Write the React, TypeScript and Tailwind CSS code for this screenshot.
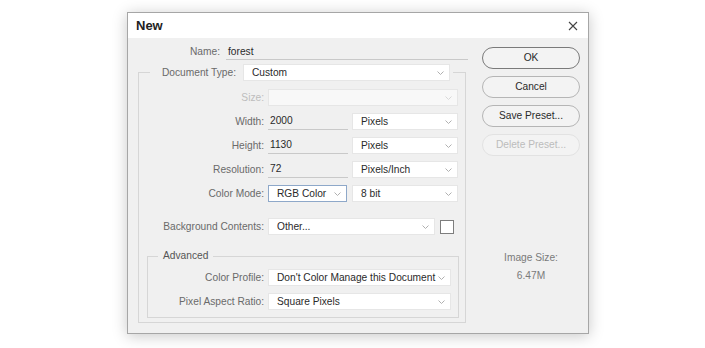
import React from 'react';

function Chevron({ light }: { light?: boolean }) {
  return (
    <svg width="7" height="4" viewBox="0 0 7 4" className="shrink-0">
      <path d="M0.5 0.5 L3.5 3.5 L6.5 0.5" fill="none" stroke={light ? '#d8d8d8' : '#b0b0b0'} strokeWidth="1" />
    </svg>
  );
}

function Select({ width, value, disabled, focused }: { width: string; value?: string; disabled?: boolean; focused?: boolean }) {
  const border = focused ? 'border-[#8ea8c9]' : 'border-[#e6e6e6]';
  const bg = disabled ? 'bg-[#f8f8f8]' : 'bg-white';
  return (
    <div className={`h-[17px] ${width} ${bg} ${border} border flex items-center justify-between pl-[8px] pr-[5px]`}>
      <span className="text-[#2a2a2a] whitespace-nowrap">{value}</span>
      <Chevron light={disabled} />
    </div>
  );
}

function Field({ value }: { value: string }) {
  return (
    <div className="h-[17px] w-[80px] border-b border-[#c9c9c9] pl-[2px] flex items-center text-[#2a2a2a]">{value}</div>
  );
}

function Row({ label, labelW, disabled, className, children }: { label: string; labelW: string; disabled?: boolean; className?: string; children: React.ReactNode }) {
  return (
    <div className={`flex items-center h-[17px] ${className || ''}`}>
      <div className={`${labelW} shrink-0 text-right pr-[4px] whitespace-nowrap ${disabled ? 'text-[#bdbdbd]' : 'text-[#6a6a6a]'}`}>{label}</div>
      {children}
    </div>
  );
}

function Button({ label, primary, disabled }: { label: string; primary?: boolean; disabled?: boolean }) {
  const border = primary ? 'border-[#7a7a7a]' : disabled ? 'border-[#e2e2e2]' : 'border-[#b5b5b5]';
  const text = disabled ? 'text-[#bcbcbc]' : 'text-[#2a2a2a]';
  return (
    <div className={`w-[98px] h-[22px] rounded-full border ${border} ${text} bg-[#f3f3f3] flex items-center justify-center`}>{label}</div>
  );
}

export default function App() {
  return (
    <div className="w-[705px] h-[348px] bg-white pt-[12px] pl-[127px] font-['Liberation_Sans',Arial,sans-serif] text-[10.2px] leading-[14px]">
      <div className="w-[462px] h-[322px] border border-[#a6a6a6] bg-[#f0f0f0] shadow-[0_2px_14px_rgba(0,0,0,0.22)] flex flex-col">
        {/* title bar */}
        <div className="h-[25px] bg-white flex items-center justify-between pl-[8px] pr-[10px] shrink-0">
          <span className="font-bold text-[13px] text-[#222]">New</span>
          <svg width="10" height="10" viewBox="0 0 10 10">
            <path d="M1 1 L9 9 M9 1 L1 9" stroke="#444" strokeWidth="1.1" />
          </svg>
        </div>

        <div className="flex flex-1">
          {/* left column */}
          <div className="w-[344px] pl-[10px] pt-[6px]">
            <div className="flex items-center h-[16px]">
              <div className="w-[84px] text-right pr-[2px] text-[#6a6a6a]">Name:</div>
              <div className="ml-[4px] w-[242px] h-[16px] border-b border-[#c9c9c9] pl-[2px] flex items-center text-[#2a2a2a]">forest</div>
            </div>

            <fieldset className="mt-[4px] w-[328px] border border-[#d6d6d6] pt-[8px] pb-[4px]">
              <legend className="ml-[11px] pl-[12px] pr-[3px]">
                <div className="flex items-center h-[17px]">
                  <span className="w-[81px] text-[#6a6a6a] whitespace-nowrap">Document Type:</span>
                  <Select width="w-[207px]" value="Custom" />
                </div>
              </legend>

              <div className="flex flex-col gap-[7px]">
                <Row label="Size:" labelW="w-[129px]" disabled>
                  <Select width="w-[190px]" disabled />
                </Row>
                <Row label="Width:" labelW="w-[129px]">
                  <Field value="2000" />
                  <div className="ml-[4px]"><Select width="w-[106px]" value="Pixels" /></div>
                </Row>
                <Row label="Height:" labelW="w-[129px]">
                  <Field value="1130" />
                  <div className="ml-[4px]"><Select width="w-[106px]" value="Pixels" /></div>
                </Row>
                <Row label="Resolution:" labelW="w-[129px]">
                  <Field value="72" />
                  <div className="ml-[4px]"><Select width="w-[106px]" value="Pixels/Inch" /></div>
                </Row>
                <Row label="Color Mode:" labelW="w-[129px]">
                  <Select width="w-[79px]" value="RGB Color" focused />
                  <div className="ml-[5px]"><Select width="w-[106px]" value="8 bit" /></div>
                </Row>
                <Row label="Background Contents:" labelW="w-[129px]" className="mt-[9px]">
                  <Select width="w-[167px]" value="Other..." />
                  <div className="ml-[5px] w-[14px] h-[14px] border border-[#7d7d7d] bg-white" />
                </Row>

                <fieldset className="mt-[7px] ml-[8px] w-[312px] border border-[#d6d6d6] pt-[6px] pb-[7px]">
                  <legend className="ml-[10px] px-[5px] text-[#555]">Advanced</legend>
                  <div className="flex flex-col gap-[7px]">
                    <Row label="Color Profile:" labelW="w-[120px]">
                      <Select width="w-[183px]" value="Don't Color Manage this Document" />
                    </Row>
                    <Row label="Pixel Aspect Ratio:" labelW="w-[120px]">
                      <Select width="w-[183px]" value="Square Pixels" />
                    </Row>
                  </div>
                </fieldset>
              </div>
            </fieldset>
          </div>

          {/* right column */}
          <div className="pl-[10px] pt-[9px] flex flex-col">
            <div className="flex flex-col gap-[7px]">
              <Button label="OK" primary />
              <Button label="Cancel" />
              <Button label="Save Preset..." />
              <Button label="Delete Preset..." disabled />
            </div>
            <div className="w-[98px] mt-[95px] text-center text-[#7a7a7a]">Image Size:</div>
            <div className="w-[98px] mt-[4px] text-center text-[#7a7a7a]">6.47M</div>
          </div>
        </div>
      </div>
    </div>
  );
}
